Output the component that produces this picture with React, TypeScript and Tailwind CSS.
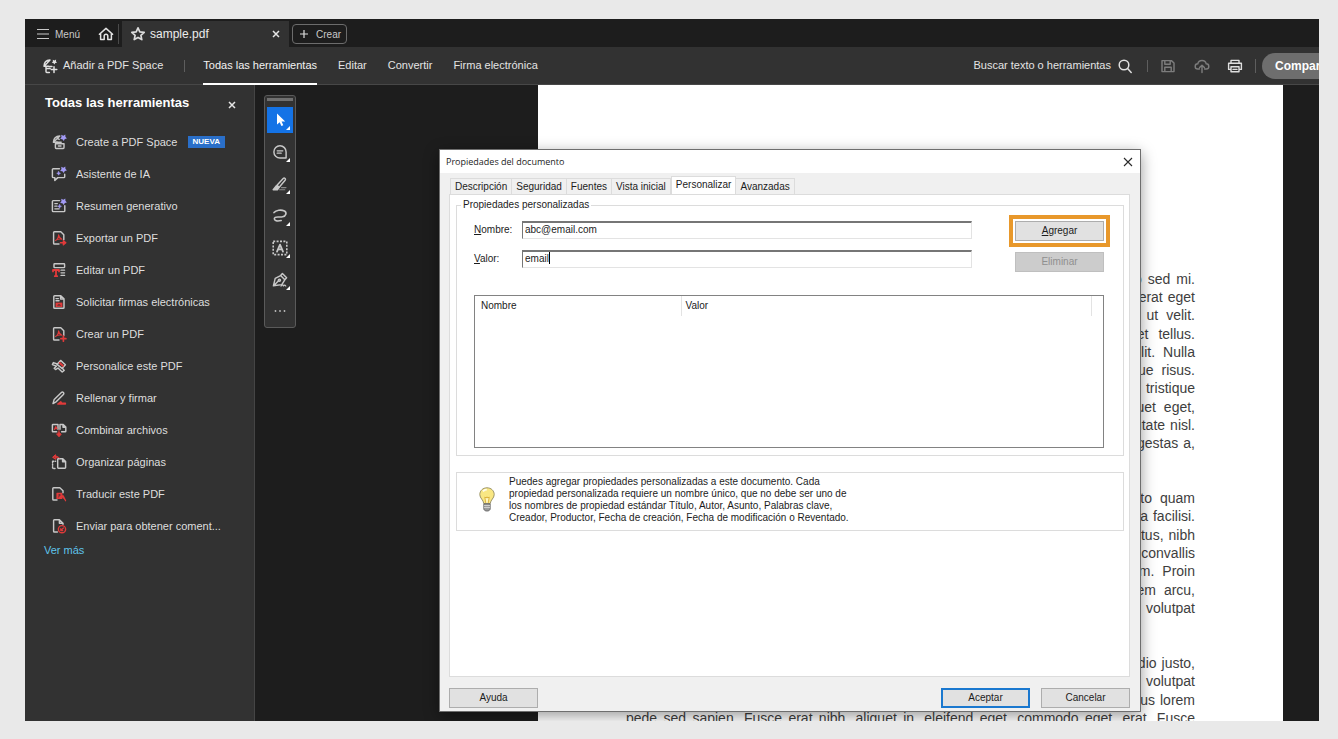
import type { ReactNode } from "react";

const GREY = "#c8c8c8";
const RED = "#e03a3a";
const VIOLET = "#a39bf5";

function Glyph({ children, className = "size-4" }: { children: ReactNode; className?: string }) {
  return (
    <svg
      viewBox="0 0 16 16"
      className={`${className} shrink-0`}
      fill="none"
      stroke={GREY}
      strokeWidth="1.45"
      strokeLinejoin="round"
      strokeLinecap="round"
      aria-hidden="true"
    >
      {children}
    </svg>
  );
}

const sparkle = (
  <path d="M10.2.8l2.200.9 1.900-1.200.1 2.200 1.500 1.700-2.100.7-1 1.900-1.400-1.700-2.200-.4 1.300-1.900z" fill={VIOLET} stroke="none" />
);

const acrobatMark = (
  <path
    d="M4.600 10.400c1.800-.8 2.900-2.800 3-5.600.5 2.500 1.600 3.900 3.400 4.400-2.400-.4-4.400-.1-6.400 1.200z"
    stroke={RED}
    strokeWidth="1.100"
  />
);

const tools: { label: string; badge?: string; icon: ReactNode }[] = [
  {
    label: "Create a PDF Space",
    badge: "NUEVA",
    icon: (
      <>
        <path d="M2.400 8.200C2.600 4.600 5 2.200 8.800 2L6.200 4.600c1 .2 1.400.4 2 .8M2.400 8.200h4M2.400 8.200l3.600-3.400" />
        <path d="M4.400 9.800V13.600c0 .5.3.8.800.8h7c.5 0 .8-.3.8-.8V9.800zM4.400 9.800l.8-1.600h5M7.400 12h2.600" />
        {sparkle}
      </>
    ),
  },
  {
    label: "Asistente de IA",
    icon: (
      <>
        <path d="M8.400 2.800H2.200a.8.8 0 0 0-.8.8v7.200c0 .4.400.8.800.8h1.600v2.800l3-2.800h6c.5 0 .9-.4.900-.8V8.200" />
        <path d="M7.600 5.400l.7 1.300 1.300.6-1.300.6-.7 1.300-.6-1.300-1.300-.6 1.300-.6z" fill={VIOLET} stroke={VIOLET} strokeWidth="0.500" />
        {sparkle}
      </>
    ),
  },
  {
    label: "Resumen generativo",
    icon: (
      <>
        <path d="M8.600 2.600H2.200a.8.8 0 0 0-.8.8v9.400c0 .5.400.8.800.8h10.800c.5 0 .8-.3.8-.8V7.600" />
        <path d="M3.800 5.600h2.600M3.800 8.200h2.200M3.800 10.800h4.400" strokeWidth="1.200" />
        <path d="M8.600 6.400l.6 1.300 1.300.6-1.300.6-.6 1.300-.6-1.300-1.300-.6 1.300-.6z" fill={VIOLET} stroke={VIOLET} strokeWidth="0.500" />
        {sparkle}
      </>
    ),
  },
  {
    label: "Exportar un PDF",
    icon: (
      <>
        <path d="M8 14H3.400a.8.8 0 0 1-.8-.8V2.600c0-.4.400-.8.800-.8h6.400l3 3v5" />
        {acrobatMark}
        <path d="M9.400 12.800h3M12.400 10.800l2.400 2-2.400 2z" stroke={RED} fill={RED} />
      </>
    ),
  },
  {
    label: "Editar un PDF",
    icon: (
      <>
        <rect x="3" y="1.800" width="10.600" height="3.800" rx="0.600" />
        <path d="M10 8.200h3.600M10 10.800h3.600M10 13.400h3.600" strokeWidth="1.300" />
        <path d="M2 9.400V8h6v1.400M5 8v6.200M3.800 14.200h2.400" stroke={RED} strokeWidth="1.800" />
      </>
    ),
  },
  {
    label: "Solicitar firmas electrónicas",
    icon: (
      <>
        <path d="M2.800 13.400V2.600c0-.4.400-.8.800-.8h6.200l3.200 3v8.600c0 .5-.3.8-.8.800H3.600a.8.800 0 0 1-.8-.8zM9.600 2v3h3M5 4.600h2.400M5 6.800h3" />
        <path d="M4.600 8.600h6.800v4.400H4.600z" fill={RED} stroke="none" />
        <path d="M7 11.800v-1h2v1" stroke="#323232" strokeWidth="0.800" />
      </>
    ),
  },
  {
    label: "Crear un PDF",
    icon: (
      <>
        <path d="M8 14H3.400a.8.8 0 0 1-.8-.8V2.600c0-.4.400-.8.800-.8h6.400l3 3v4.600" />
        {acrobatMark}
        <path d="M12.400 10.200v5M9.900 12.700h5" stroke={RED} strokeWidth="1.700" />
      </>
    ),
  },
  {
    label: "Personalice este PDF",
    icon: (
      <>
        <path d="M6 6.400L9.600 2.400l4.800 4.400-3.400 3.600zM6.200 6L2.400 4.600l-1 2 4 1.600L3.200 10.200l1.400 1.400 2.400-1.600 4.200 4 2-1.600-1.800-2.200" />
        <path d="M8.800 5l3 2.800" stroke={RED} strokeWidth="2" />
      </>
    ),
  },
  {
    label: "Rellenar y firmar",
    icon: (
      <>
        <path d="M2 13.600l1.200-4.200 7.200-7c.6-.6 1.400-.6 2 0s.6 1.400 0 2L5.400 11.600z" />
        <path d="M6.800 14l3-2.200.8 1.400h3.800v.8z" fill={RED} stroke={RED} />
      </>
    ),
  },
  {
    label: "Combinar archivos",
    icon: (
      <>
        <path d="M5.600 9.800H2a.6.6 0 0 1-.6-.6V3c0-.4.300-.6.600-.6h5v4.800M10.600 9.800h3.600c.3 0 .6-.3.600-.6V5l-2.600-2.600H9v4.800M12 2.600v2.600h2.600" />
        <path d="M3.400 7.400l1.400-2.800 1.100 2.200M3.800 6.600h2" stroke={RED} strokeWidth="1.100" />
        <path d="M8 8.400v3M5.800 12.200L8 14.800l2.200-2.600L8 10.400z" stroke={RED} fill={RED} strokeWidth="0.900" />
      </>
    ),
  },
  {
    label: "Organizar páginas",
    icon: (
      <>
        <path d="M7.400 4.800h4.400l2.800 2.800v6c0 .4-.3.700-.7.700H7.400a.7.700 0 0 1-.7-.7V5.500c0-.4.300-.7.700-.7zM11.600 5v2.800h2.800" />
        <path d="M1.600 7.200v7.200h3.400M1.600 7.200h3" strokeDasharray="1.200 1.600" />
        <path d="M2.400 3.200c2.400-1.800 5-1 5.800.8M4.200.9L1.600 3.300l3 1.900z" stroke={RED} fill={RED} strokeWidth="1" />
      </>
    ),
  },
  {
    label: "Traducir este PDF",
    icon: (
      <>
        <path d="M6 14H2.600a.8.8 0 0 1-.8-.8V2.600c0-.4.400-.8.800-.8h6.200l3.200 3v2" />
        <path d="M6 7.400h4.800v5H6zM9.400 9.800h2.800l2.400 5" fill={RED} stroke={RED} strokeWidth="1.200" />
        <path d="M7.400 9h2.200M8.500 8.400c.2 1.400-.4 2.400-1.300 3" stroke="#323232" strokeWidth="0.600" />
      </>
    ),
  },
  {
    label: "Enviar para obtener coment...",
    icon: (
      <>
        <path d="M6.400 14H3.400a.8.8 0 0 1-.8-.8V2.600c0-.4.400-.8.800-.8h5l3.600 3.400v1M8.400 2v3.200h3.400" />
        <circle cx="11" cy="11.200" r="3.600" stroke={RED} />
        <path d="M9.800 12.600l2.600-2.600M9.800 12.600v-2M9.800 12.600h2" stroke={RED} strokeWidth="1.200" />
      </>
    ),
  },
];

const railTools: { label: string; icon: ReactNode }[] = [
  {
    label: "Seleccionar",
    icon: <path d="M5 1.400v11.200l2.700-2.300 1.700 3.700 1.900-.8-1.700-3.700h3.600z" fill="#fff" stroke="none" />,
  },
  {
    label: "Comentario",
    icon: (
      <>
        <path d="M8 1.800a6.100 6.100 0 1 0 0 12.200h6.100V8A6.100 6.100 0 0 0 8 1.800z" />
        <path d="M5.200 6.800h5.600M5.200 9.200h4" strokeWidth="1.300" />
      </>
    ),
  },
  {
    label: "Resaltar",
    icon: (
      <>
        <path d="M5 9.200L11.200 2.400c.5-.5 1.400-.5 1.900 0s.5 1.400 0 1.900L7.200 11.200z" />
        <path d="M4.400 9.800L1.200 13.800h4.200l1.600-2.200z" fill={GREY} />
        <path d="M7.600 13.800h5.200M9.400 11.600h4.600" strokeWidth="1.100" stroke="#8a8a8a" />
      </>
    ),
  },
  {
    label: "Dibujar",
    icon: (
      <path
        d="M2 4.600C4 2.200 9 1.400 12.400 3c2.800 1.600 1.600 5.200-1.800 5.800-3 .6-5.600-.4-7.400.6-1.500.8-1 3.200 1.600 3.500 1.500.2 2.800 0 4.400-.4"
        strokeWidth="1.600"
      />
    ),
  },
  {
    label: "Texto",
    icon: (
      <>
        <rect x="1.200" y="1.400" width="13.600" height="13.200" strokeDasharray="2 1.400" strokeWidth="1.600" strokeLinecap="butt" />
        <path d="M5 11.600L8 4.600l3 7M6.200 9.400h3.600" strokeWidth="1.800" />
      </>
    ),
  },
  {
    label: "Firmar",
    icon: (
      <>
        <path d="M1.400 13.800l1.800-7.400L8.600 3.600l4.200 4.200-3 4.800zM1.800 13.400l5-5M8.600 3.600L10.400 1.600l4.200 4.200-1.800 2" />
        <circle cx="7.400" cy="8.200" r="1.100" />
        <path d="M9 14c1.400-1.400 2-1.400 2.400 0 1-1.200 1.600-1 2.400 0" strokeWidth="1.200" />
      </>
    ),
  },
];

const tabs = ["Descripción", "Seguridad", "Fuentes", "Vista inicial", "Personalizar", "Avanzadas"];

type Line = { words: string[]; gap: string };

const paragraphs: { height: string; lines: Line[] }[] = [
  {
    height: "h-[182px]",
    lines: [
      { words: ["leo", "sed", "mi."], gap: "gap-1.5" },
      { words: ["erat", "eget"], gap: "gap-[5px]" },
      { words: ["ut", "velit."], gap: "gap-2" },
      { words: ["et", "tellus."], gap: "gap-2.5" },
      { words: ["velit.", "Nulla"], gap: "gap-2" },
      { words: ["neque", "risus."], gap: "gap-2" },
      { words: ["tristique"], gap: "gap-1" },
      { words: ["aliquet", "eget,"], gap: "gap-2" },
      { words: ["vulputate", "nisl."], gap: "gap-[5px]" },
      { words: ["egestas", "a,"], gap: "gap-[5px]" },
    ],
  },
  {
    height: "h-32",
    lines: [
      { words: ["justo", "quam"], gap: "gap-2" },
      { words: ["Nulla", "facilisi."], gap: "gap-[5px]" },
      { words: ["lectus,", "nibh"], gap: "gap-[5px]" },
      { words: ["convallis"], gap: "gap-1" },
      { words: ["sem.", "Proin"], gap: "gap-2" },
      { words: ["lorem", "arcu,"], gap: "gap-2" },
      { words: ["volutpat"], gap: "gap-1" },
    ],
  },
  {
    height: "h-[73px]",
    lines: [
      { words: ["odio", "justo,"], gap: "gap-[5px]" },
      { words: ["volutpat"], gap: "gap-1" },
      { words: ["risus", "lorem"], gap: "gap-[5px]" },
      {
        words: "pede sed sapien. Fusce erat nibh, aliquet in, eleifend eget, commodo eget, erat. Fusce".split(" "),
        gap: "gap-[5px]",
      },
    ],
  },
];

function TitleBar() {
  return (
    <header className="flex h-7 shrink-0 items-center bg-[#1d1d1d] pt-0.5 text-[#c9c9c9]">
      <button className="ml-3 flex items-center gap-1.5 text-[10px]">
        <svg viewBox="0 0 12 12" className="size-3" stroke="currentColor" strokeWidth="1.200" aria-hidden="true">
          <path d="M0 1.500h12M0 6h12M0 10.500h12" />
        </svg>
        Menú
      </button>
      <button aria-label="Inicio" className="ml-[18px]">
        <Glyph>
          <path
            d="M2.600 7.200v6.200h3.600V10c0-1 .8-1.800 1.800-1.800s1.800.8 1.800 1.800v3.400h3.600V7.200M1.400 8.200L8 2.400l6.600 5.800"
            stroke="#e2e2e2"
            strokeWidth="1.500"
          />
        </Glyph>
      </button>
      <span className="ml-1 h-5 w-px bg-[#4a4a4a]" />
      <div className="ml-[3px] flex h-[26px] w-[167px] items-center bg-[#323232] pl-2 pr-2">
        <Glyph>
          <path
            d="M8 1.800l1.800 4 4.400.5-3.300 3 .9 4.300L8 11.400l-3.800 2.200.9-4.300-3.300-3 4.400-.5z"
            stroke="#dcdcdc"
            strokeWidth="1.700"
          />
        </Glyph>
        <span className="ml-1 text-[12px] text-[#ececec]">sample.pdf</span>
        <button aria-label="Cerrar pestaña" className="ml-auto">
          <svg viewBox="0 0 10 10" className="size-2.5" stroke="#e6e6e6" strokeWidth="1.500" aria-hidden="true">
            <path d="M2 2l6 6M8 2L2 8" />
          </svg>
        </button>
      </div>
      <button className="ml-[3px] flex h-5 items-center gap-2 rounded border border-[#6c6c6c] pl-[7px] pr-[5px] text-[10px]">
        <svg viewBox="0 0 8 8" className="size-2" stroke="#dedede" strokeWidth="1.200" aria-hidden="true">
          <path d="M4 0v8M0 4h8" />
        </svg>
        Crear
      </button>
    </header>
  );
}

function ToolBar() {
  return (
    <nav className="flex h-[38px] shrink-0 items-center border-b border-[#474747] bg-[#323232] text-[11px] text-[#e4e4e4]">
      <button className="ml-[17px] flex items-center gap-[5px]">
        <Glyph>
          <path d="M2 8.200C2 4.600 4.400 2.200 8 2L5.600 4.600M2 8.200h4.400M2 8.200L5 5.200M4 8.400v5.200c0 .4.300.8.800.8h2.600M4.200 10.400h4M7 8.400h3" stroke="#e0e0e0" />
          <path d="M10.800 1.800l1.600.6 1.700-1-.2 1.900 1.100 1.400-1.700.4-1 1.500-.9-1.500-1.600-.4 1.100-1.200z" fill="#e0e0e0" stroke="none" />
          <path d="M12 8.800v5.600M9.200 11.600h5.600" stroke="#e0e0e0" strokeWidth="1.500" />
        </Glyph>
        Añadir a PDF Space
      </button>
      <span className="mr-[18px] ml-[21px] h-3 w-px bg-[#5e5e5e]" />
      <a href="#todas" className="flex h-[38px] items-center border-b-2 border-white pt-0.5 text-[#f2f2f2]">
        Todas las herramientas
      </a>
      <a href="#editar" className="ml-[21px]">Editar</a>
      <a href="#convertir" className="ml-[21px]">Convertir</a>
      <a href="#firma" className="ml-[21px]">Firma electrónica</a>
      <button className="ml-auto flex items-center gap-1.5">
        Buscar texto o herramientas
        <Glyph>
          <circle cx="7" cy="7" r="4.800" stroke="#e0e0e0" strokeWidth="1.500" />
          <path d="M10.600 10.600l3.600 3.800" stroke="#e0e0e0" strokeWidth="1.500" />
        </Glyph>
      </button>
      <span className="ml-3.5 h-3 w-px bg-[#5e5e5e]" />
      <button aria-label="Guardar" className="ml-3">
        <Glyph>
          <path d="M2 2.600h9.400L14 5v8.600H2zM4.800 2.800v3.400h5.400V2.800M4.800 13.400V9.200h6.400v4.200" stroke="#7c7c7c" />
        </Glyph>
      </button>
      <button aria-label="Subir a la nube" className="ml-[18px]">
        <Glyph>
          <path d="M5.400 11H3.800a2.600 2.600 0 0 1 0-5.200C4.200 3.600 6 2.400 8 2.400s3.800 1.200 4.200 3.400a2.600 2.600 0 0 1 0 5.200h-1.600M8 14.600V7.400M5.600 9.600L8 7.200l2.400 2.400" stroke="#7c7c7c" />
        </Glyph>
      </button>
      <button aria-label="Imprimir" className="ml-[17px]">
        <Glyph>
          <path d="M4 5V2.400h8V5M4 11.400H1.600V5.200h12.800v6.200H12M4 8.800h8v5H4zM6 11.400h4" stroke="#dedede" strokeWidth="1.400" />
        </Glyph>
      </button>
      <span className="ml-3 h-3.5 w-px bg-[#5e5e5e]" />
      <div className="ml-1.5 flex w-[57px] overflow-hidden">
        <button className="h-[26px] shrink-0 rounded-full bg-[#6e6e6e] px-[13px] text-[12px] font-bold text-white">Compartir</button>
      </div>
    </nav>
  );
}

function Sidebar() {
  return (
    <aside className="w-[230px] shrink-0 border-r border-[#454545] bg-[#323232] text-[#dedede]">
      <div className="flex items-center justify-between pl-5 pr-[17px] pt-2.5">
        <h2 className="text-[13px] leading-4 font-bold text-white">Todas las herramientas</h2>
        <button aria-label="Cerrar panel" className="pt-1">
          <svg viewBox="0 0 10 10" className="size-2.5" stroke="#e6e6e6" strokeWidth="1.500" aria-hidden="true">
            <path d="M2 2l6 6M8 2L2 8" />
          </svg>
        </button>
      </div>
      <ul className="pt-[15px]">
        {tools.map((tool) => (
          <li key={tool.label}>
            <button className="flex h-8 w-full items-center pl-[26px] text-[11px] whitespace-nowrap">
              <Glyph>{tool.icon}</Glyph>
              <span className="ml-[9px]">{tool.label}</span>
              {tool.badge && (
                <span className="ml-2.5 flex h-3 items-center bg-[#2a6fc9] px-[5px] text-[8px] font-bold text-white">{tool.badge}</span>
              )}
            </button>
          </li>
        ))}
      </ul>
      <a href="#mas" className="ml-[19px] block text-[11px] leading-4 text-[#5fc3ea]">Ver más</a>
    </aside>
  );
}

function Rail() {
  return (
    <div className="flex h-[233px] w-8 flex-col items-center rounded-[3px] border border-[#5a5a5a] bg-[#323232] pt-0.5">
      <span className="h-[3px] w-[26px] shrink-0 bg-[#707070]" />
      <div className="mt-1.5 flex flex-col gap-[6px]">
        {railTools.map((tool, i) => (
          <button
            key={tool.label}
            aria-label={tool.label}
            className={`relative flex h-[26px] w-[26px] items-center justify-center ${i === 0 ? "bg-[#1473e6]" : ""}`}
          >
            <Glyph>{tool.icon}</Glyph>
            <svg viewBox="0 0 4 4" className="absolute right-[3px] bottom-[3px] size-1" aria-hidden="true">
              <path d="M4 0v4H0z" fill="#fff" />
            </svg>
          </button>
        ))}
      </div>
      <button aria-label="Más" className="mt-4">
        <svg viewBox="0 0 12 4" className="h-1 w-3" fill="#bdbdbd" aria-hidden="true">
          <circle cx="1.500" cy="2" r="0.900" />
          <circle cx="6" cy="2" r="0.900" />
          <circle cx="10.500" cy="2" r="0.900" />
        </svg>
      </button>
    </div>
  );
}

function Page() {
  return (
    <article className="mr-9 flex flex-1 flex-col gap-[37px] overflow-hidden bg-white pt-[185px] pr-[88px] pl-[88px] text-[14px] leading-[18px] text-[#3e3e3e]">
      {paragraphs.map((p, i) => (
        <div key={i} className={`flex shrink-0 flex-col justify-between ${p.height}`}>
          {p.lines.map((line, j) => (
            <p key={j} className={`flex ${line.words.length > 5 ? "justify-between" : `justify-end ${line.gap}`}`}>
              {line.words.map((w, k) => (
                <span key={k}>{w}</span>
              ))}
            </p>
          ))}
        </div>
      ))}
    </article>
  );
}

function Bulb() {
  return (
    <svg viewBox="0 0 16 25" className="h-[25px] w-4 shrink-0" aria-hidden="true">
      <path d="M8 .8C3.800.8.8 3.800.8 7.600c0 3.600 3.600 5.200 4 9h6.400c.4-3.800 4-5.400 4-9C15.200 3.800 12.200.8 8 .8z" fill="#f9e783" stroke="#9c9468" />
      <path d="M4 4.400c1-1.300 2.200-1.800 3.800-1.800" stroke="#fffdf0" strokeWidth="1.800" fill="none" />
      <path d="M6.800 16l-1-6 1.400 1 .8-1.200.8 1.200 1.400-1-1 6" stroke="#d6a72c" strokeWidth="0.800" fill="#fff7c0" />
      <path d="M4.800 16.800h6.400v5.400L9.600 24H6.400l-1.600-1.800z" fill="#9a9a9a" stroke="#5f5f5f" strokeWidth="0.800" />
      <path d="M5 18.600h6M5 20.600h6" stroke="#e2e2e2" strokeWidth="0.800" />
    </svg>
  );
}

const push = "h-5 w-[89px] border text-[10px]";
const field =
  "h-[18px] w-[450px] border border-t-2 border-[#e3e3e3] border-t-[#767676] border-l-[#767676] bg-white px-0.5 pb-0.5 text-[10px] text-[#1c1c1c] outline-none";

function Dialog() {
  return (
    <section
      role="dialog"
      aria-label="Propiedades del documento"
      className="absolute top-[130px] left-[414px] flex h-[563px] w-[702px] flex-col border border-[#6e6e6e] bg-[#f0f0f0] text-[10px] leading-3 text-[#1c1c1c] shadow-[0_4px_14px_rgba(0,0,0,0.4)]"
    >
      <div className="flex h-[23px] shrink-0 items-center justify-between bg-white pr-[7px] pl-1.5">
        <h1 className="font-['Open_Sans',sans-serif] text-[9px]">Propiedades del documento</h1>
        <button aria-label="Cerrar">
          <svg viewBox="0 0 10 10" className="size-2.5" stroke="#2a2a2a" strokeWidth="1.100" aria-hidden="true">
            <path d="M1 1l8 8M9 1L1 9" />
          </svg>
        </button>
      </div>

      <div className="flex flex-1 flex-col pt-[3px] pr-2.5 pl-[9px]">
        <div role="tablist" className="flex items-end pl-px">
          {tabs.map((t) =>
            t === "Personalizar" ? (
              <button key={t} role="tab" aria-selected="true" className="-mb-px h-[19px] border border-b-0 border-[#dcdcdc] bg-white px-1 pb-0.5">
                {t}
              </button>
            ) : (
              <button key={t} role="tab" aria-selected="false" className="h-4 border border-b-0 border-l-0 border-[#dcdcdc] px-1 first:border-l">
                {t}
              </button>
            ),
          )}
        </div>

        <div className="flex h-[483px] flex-col border border-[#dcdcdc] bg-white pt-1 pr-[5px] pl-1.5">
          <fieldset className="h-[257px] border border-[#dcdcdc] pr-[19px] pl-[17px]">
            <legend className="ml-[-13px] px-0.5">Propiedades personalizadas</legend>
            <div className="flex justify-between pt-2.5">
              <div className="flex flex-col gap-[11px]">
                <div className="flex items-center">
                  <label htmlFor="nombre" className="w-12"><u>N</u>ombre:</label>
                  <input id="nombre" className={field} defaultValue="abc@email.com" />
                </div>
                <div className="relative flex items-center">
                  <label htmlFor="valor" className="w-12"><u>V</u>alor:</label>
                  <input id="valor" className={field} defaultValue="email" />
                  <span className="absolute top-0.5 left-[75px] h-3 w-px bg-black" />
                </div>
              </div>
              <div className="flex flex-col gap-[11px]">
                <button className={`${push} border-[#adadad] bg-[#e1e1e1] outline-4 outline-offset-2 outline-[#e8982b]`}><u>A</u>gregar</button>
                <button disabled className={`${push} border-[#bfbfbf] bg-[#cccccc] text-[#8f8f8f]`}>Eliminar</button>
              </div>
            </div>
            <div className="mt-[23px] h-[153px] border border-[#828282]">
              <table className="w-full table-fixed text-left">
                <thead>
                  <tr className="h-5">
                    <th className="w-[206px] border-r border-[#e3e3e3] pl-1.5 font-normal">Nombre</th>
                    <th className="border-r border-[#e3e3e3] pl-1 font-normal">Valor</th>
                    <th className="w-3" />
                  </tr>
                </thead>
              </table>
            </div>
          </fieldset>

          <div className="mt-4 flex h-[59px] items-center border border-[#dcdcdc] pb-1 pl-[22px]">
            <Bulb />
            <p className="ml-3.5 w-[344px]">
              Puedes agregar propiedades personalizadas a este documento. Cada
              <br />
              propiedad personalizada requiere un nombre único, que no debe ser uno de
              <br />
              los nombres de propiedad estándar Título, Autor, Asunto, Palabras clave,
              <br />
              Creador, Productor, Fecha de creación, Fecha de modificación o Reventado.
            </p>
          </div>
        </div>

        <div className="flex gap-[11px] pt-[11px]">
          <button className={`${push} mr-auto border-[#adadad] bg-[#e1e1e1]`}>Ayuda</button>
          <button className={`${push} border-2 border-[#1a78cf] bg-[#e1e1e1]`}>Aceptar</button>
          <button className={`${push} border-[#adadad] bg-[#e1e1e1]`}>Cancelar</button>
        </div>
      </div>
    </section>
  );
}

export default function App() {
  return (
    <div className="flex h-screen min-h-[480px] bg-[#e9e9e9] pt-[19px] pr-[19px] pb-[18px] pl-[25px] font-['Liberation_Sans',Arial,sans-serif]">
      <main className="relative flex min-w-0 flex-1 flex-col overflow-hidden bg-[#1d1d1d]">
        <TitleBar />
        <ToolBar />
        <div className="flex min-h-0 flex-1">
          <Sidebar />
          <div className="w-[283px] shrink-0 pt-2.5 pl-[9px]">
            <Rail />
          </div>
          <Page />
        </div>
        <Dialog />
      </main>
    </div>
  );
}
